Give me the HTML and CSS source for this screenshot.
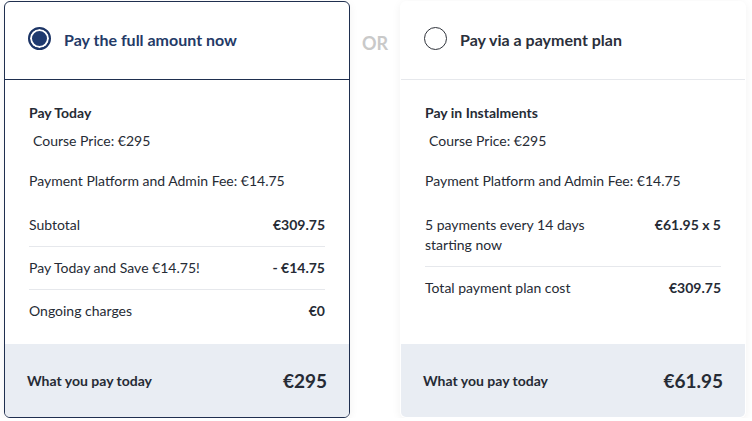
FILE: index.html
```html
<!DOCTYPE html>
<html lang="en">
<head>
    <meta charset="UTF-8">
    <meta name="viewport" content="width=device-width, initial-scale=1.0">
    <title>Payment options</title>
    <link rel="stylesheet" href="styles.css">
</head>
<body>
    <div class="options">
        <div class="card selected">
            <div class="card-head">
                <span class="radio"></span>
                <span class="title">Pay the full amount now</span>
            </div>
            <div class="card-body">
                <div class="heading">Pay Today</div>
                <div class="line indent">Course Price: €295</div>
                <div class="line fee">Payment Platform and Admin Fee: €14.75</div>
                <div class="rows">
                    <div class="row"><span>Subtotal</span><span class="val">€309.75</span></div>
                    <div class="row"><span>Pay Today and Save €14.75!</span><span class="val">- €14.75</span></div>
                    <div class="row"><span>Ongoing charges</span><span class="val">€0</span></div>
                </div>
            </div>
            <div class="card-foot">
                <span>What you pay today</span>
                <span class="total">€295</span>
            </div>
        </div>

        <div class="or">OR</div>

        <div class="card">
            <div class="card-head">
                <span class="radio"></span>
                <span class="title">Pay via a payment plan</span>
            </div>
            <div class="card-body">
                <div class="heading">Pay in Instalments</div>
                <div class="line indent">Course Price: €295</div>
                <div class="line fee">Payment Platform and Admin Fee: €14.75</div>
                <div class="rows">
                    <div class="row"><span>5 payments every 14 days<br>starting now</span><span class="val">€61.95 x 5</span></div>
                    <div class="row"><span>Total payment plan cost</span><span class="val">€309.75</span></div>
                </div>
            </div>
            <div class="card-foot">
                <span>What you pay today</span>
                <span class="total">€61.95</span>
            </div>
        </div>
    </div>
</body>
</html>
```

FILE: styles.css
```css
body {
    margin: 0;
    background: #fff;
    font-family: "Lato", "Open Sans", sans-serif;
    color: #262b35;
    font-size: 14px;
}
.options {
    display: flex;
    align-items: stretch;
    padding: 1px 6px 0 4px;
}
.card {
    width: 346px;
    height: 417px;
    box-sizing: border-box;
    display: flex;
    flex-direction: column;
    background: #fff;
    border-radius: 6px;
    border: 1px solid transparent;
    box-shadow: 0 2px 10px rgba(0,0,0,0.06);
    overflow: hidden;
}
.card.selected {
    border-color: #1f2f4f;
}
.card-head {
    height: 78px;
    box-sizing: border-box;
    display: flex;
    align-items: center;
    padding: 0 23px 4px;
    border-bottom: 1px solid #e6e8ec;
}
.selected .card-head {
    border-bottom-color: #1f2f4f;
}
.radio {
    width: 23px;
    height: 23px;
    box-sizing: border-box;
    border-radius: 50%;
    border: 1.5px solid #2f333b;
    margin-right: 13px;
}
.selected .radio {
    border: 2px solid #1d3566;
    background: #1f3a6f;
    box-shadow: inset 0 0 0 2px #fff;
}
.title {
    font-size: 16px;
    font-weight: 700;
    color: #2b303b;
    margin-top: 2px;
}
.selected .title {
    color: #243a67;
}
.card-body {
    flex: 1;
    padding: 23px 24px 0 24px;
}
.heading {
    font-weight: 700;
    line-height: 20px;
}
.line {
    line-height: 20px;
}
.indent {
    margin-top: 8px;
    padding-left: 4px;
}
.fee {
    margin-top: 20px;
}
.rows {
    margin-top: 13px;
}
.row {
    display: flex;
    justify-content: space-between;
    align-items: flex-start;
    padding: 11px 0;
    line-height: 20px;
    border-bottom: 1px solid #e6e8ec;
}
.row:last-child {
    border-bottom: none;
}
.val {
    font-weight: 700;
}
.card-foot {
    height: 73px;
    display: flex;
    justify-content: space-between;
    align-items: center;
    padding: 0 22px;
    background: #e9edf3;
    font-weight: 700;
}
.total {
    font-size: 19px;
}
.or {
    width: 50px;
    text-align: center;
    margin-top: 31px;
    font-size: 18px;
    font-weight: 700;
    color: #c9c9c9;
}
```
